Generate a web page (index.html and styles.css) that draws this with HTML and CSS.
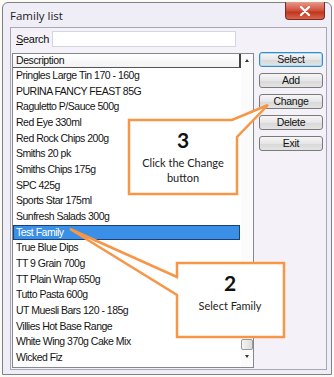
FILE: index.html
```html
<!DOCTYPE html>
<html lang="en">
<head>
  <meta charset="UTF-8"/>
  <title>Family list</title>
  <link rel="stylesheet" href="styles.css">
</head>
<body>
  <div class="screen">
    <div class="window">
      <div class="titlebar">
        <span class="title">Family list</span>
        <button class="close">
          <svg width="12" height="10" viewBox="0 0 12 10">
            <path d="M2 1 L10 9 M10 1 L2 9" stroke="#fff" stroke-width="2.2" stroke-linecap="round"/>
          </svg>
        </button>
      </div>
      <div class="client">
        <div class="search-row">
          <label class="search-label"><u>S</u>earch</label>
          <input class="search-input" type="text"/>
        </div>
        <div class="body">
          <div class="listbox">
            <div class="list-main">
              <div class="list-header">Description</div>
              <div class="rows">
                <div class="row">Pringles Large Tin 170 - 160g</div>
                <div class="row">PURINA FANCY FEAST 85G</div>
                <div class="row">Raguletto P/Sauce 500g</div>
                <div class="row">Red Eye 330ml</div>
                <div class="row">Red Rock Chips 200g</div>
                <div class="row">Smiths 20 pk</div>
                <div class="row">Smiths Chips 175g</div>
                <div class="row">SPC 425g</div>
                <div class="row">Sports Star 175ml</div>
                <div class="row">Sunfresh Salads 300g</div>
                <div class="row selected">Test Family</div>
                <div class="row">True Blue Dips</div>
                <div class="row">TT 9 Grain 700g</div>
                <div class="row">TT Plain Wrap 650g</div>
                <div class="row">Tutto Pasta 600g</div>
                <div class="row">UT Muesli Bars 120 - 185g</div>
                <div class="row">Villies Hot Base Range</div>
                <div class="row">White Wing 370g Cake Mix</div>
                <div class="row">Wicked Fiz</div>
              </div>
            </div>
            <div class="scrollbar">
              <span class="arrow up"></span>
              <div class="track"><div class="thumb"></div></div>
              <span class="arrow down"></span>
            </div>
          </div>
          <div class="buttons">
            <button class="btn default">Select</button>
            <button class="btn">Add</button>
            <button class="btn">Change</button>
            <button class="btn">Delete</button>
            <button class="btn">Exit</button>
          </div>
        </div>
      </div>
    </div>

    <!-- tutorial callouts -->
    <svg class="callouts" width="334" height="377" viewBox="0 0 334 377">
      <polygon class="callout" points="129,120 232,120 268,105 237,137 237,194 129,194"/>
      <text class="num" x="183" y="148">3</text>
      <text class="note" x="183" y="167">Click the Change</text>
      <text class="note" x="183" y="182">button</text>

      <polygon class="callout" points="177,263 284,263 284,337 177,337 177,295 70,229 177,277"/>
      <text class="num" x="230" y="291">2</text>
      <text class="note" x="230" y="310">Select Family</text>
    </svg>
  </div>
</body>
</html>
```

FILE: styles.css
```css
html, body {
  margin: 0; padding: 0;
  background: #fbfbf4;
}
.screen {
  position: relative;
  width: 334px; height: 377px;
  overflow: hidden;
  font-family: "Liberation Sans", Arial, sans-serif;
}
.window {
  box-sizing: border-box;
  margin: 2px 0 0 2px;
  width: 330px; height: 373px;
  border: 1px solid #7d818b;
  border-radius: 6px 6px 0 0;
  background: #efedf5;
  padding: 0 4px 4px 7px;
  display: flex; flex-direction: column;
}
.titlebar {
  flex: 0 0 24px;
  display: flex; align-items: flex-start;
  justify-content: space-between;
}
.title {
  margin-top: 5px;
  font-family: "Open Sans", sans-serif;
  font-size: 11.5px; color: #1c1c1c;
}
.close {
  width: 40px; height: 18px;
  margin: -1px 2px 0 0;
  border: 1px solid #7a2a22; border-top: none;
  border-radius: 0 0 4px 4px;
  background: linear-gradient(#e69a8c, #d0503c 50%, #c0361f 60%, #d8664c);
  display: flex; align-items: center; justify-content: center;
  padding: 0;
}
.client {
  flex: 1 1 auto;
  border: 1px solid #a9a6b3;
  background: #f4f2f8;
  display: flex; flex-direction: column;
}
.search-row {
  display: flex; align-items: center;
  margin-top: 3px; padding-left: 5px;
}
.search-label {
  width: 36px;
  font-size: 11px; color: #111;
  letter-spacing: -0.3px;
}
.search-input {
  box-sizing: border-box;
  width: 184px; height: 16px;
  border: 1px solid #d6d4dc;
  background: #fff;
  margin: 0; padding: 0;
}
.body {
  flex: 1 1 auto;
  display: flex;
  margin-top: 6px; padding: 0 0 1px 1px;
}
.listbox {
  box-sizing: border-box;
  width: 242px;
  border: 1px solid #828790;
  background: #fff;
  display: flex;
}
.list-main {
  flex: 1 1 auto;
}
.list-header {
  box-sizing: border-box;
  height: 14px;
  padding-left: 3px;
  border-bottom: 1px solid #555;
  border-right: 2px solid #444;
  font-size: 10.5px; line-height: 13px; color: #111;
  letter-spacing: -0.4px;
  background: linear-gradient(#ffffff, #f3f3f3);
}
.row {
  box-sizing: border-box;
  height: 15.67px;
  padding-left: 3px;
  font-size: 10.5px; line-height: 15.67px; color: #141414;
  letter-spacing: -0.5px;
  white-space: nowrap;
}
.row.selected {
  background: #3a8fe6;
  color: #fff;
  border: 1px solid #1d3f78;
  margin-right: 1px;
  padding-left: 2px;
  line-height: 13.67px;
}
.scrollbar {
  flex: 0 0 12px;
  display: flex; flex-direction: column; align-items: center;
  background: #fbfbfb;
}
.arrow {
  width: 0; height: 0;
  border-left: 2.5px solid transparent;
  border-right: 2.5px solid transparent;
}
.arrow.up {
  margin-top: 5px;
  border-bottom: 3px solid #333;
}
.arrow.down {
  margin-bottom: 9px;
  border-top: 3px solid #333;
}
.track {
  flex: 1 1 auto;
  width: 100%;
  display: flex; flex-direction: column; justify-content: flex-end;
  padding-bottom: 5px;
}
.thumb {
  box-sizing: border-box;
  height: 11px;
  border: 1px solid #9a9a9a;
  border-radius: 2px;
  background: linear-gradient(90deg, #f4f4f4, #dcdcdc);
}
.buttons {
  display: flex; flex-direction: column; gap: 6px;
  margin: -1px 0 0 5px;
}
.btn {
  box-sizing: border-box;
  width: 64px; height: 15px;
  padding: 0;
  border: 1px solid #7a7a7a; border-radius: 3px;
  background: linear-gradient(#f6f6f6, #e6e6e6 50%, #d8d8d8 51%, #e4e4e4);
  font-family: "Liberation Sans", Arial, sans-serif;
  font-size: 10.5px; line-height: 13px; color: #111;
  letter-spacing: -0.3px;
}
.btn.default {
  border-color: #3c8ac3;
  box-shadow: inset 0 0 0 1px #a8dcf6;
}
.callouts {
  position: absolute; top: 0; left: 0;
  pointer-events: none;
}
.callout {
  fill: #fff;
  stroke: #f79646; stroke-width: 2.5;
  stroke-linejoin: miter;
}
.num {
  font-family: Lato, "Open Sans", sans-serif;
  font-weight: bold; font-size: 21px;
  text-anchor: middle; fill: #111;
}
.note {
  font-family: Lato, "Open Sans", sans-serif;
  font-size: 11px;
  text-anchor: middle; fill: #222;
}
```
